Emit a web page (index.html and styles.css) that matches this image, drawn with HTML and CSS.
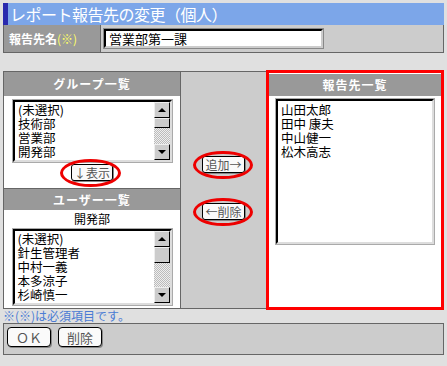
FILE: index.html
```html
<!DOCTYPE html>
<html lang="ja">
<head>
    <meta charset="UTF-8">
    <title>レポート報告先の変更</title>
    <link rel="stylesheet" href="styles.css">
</head>
<body>
    <div class="title">レポート報告先の変更（個人）</div>

    <div class="name-row">
        <div class="name-label">報告先名<span class="req">(※)</span></div>
        <div class="name-field"><div class="text-input">営業部第一課</div></div>
    </div>

    <div class="main">
        <div class="col-left">
            <div class="col-head">グループ一覧</div>
            <div class="pane">
                <div class="listbox list-group">
                    <div class="items">
                        <div>(未選択)</div>
                        <div>技術部</div>
                        <div>営業部</div>
                        <div>開発部</div>
                    </div>
                    <div class="scrollbar">
                        <div class="sb-btn"><span class="arrow-up"></span></div>
                        <div class="sb-thumb"></div>
                        <div class="sb-track"></div>
                        <div class="sb-btn"><span class="arrow-down"></span></div>
                    </div>
                </div>
                <span class="mark mark-show"><button class="btn">↓表示</button></span>
            </div>
            <div class="col-head head-user">ユーザー一覧</div>
            <div class="pane pane-user">
                <div class="group-name">開発部</div>
                <div class="listbox list-user">
                    <div class="items">
                        <div>(未選択)</div>
                        <div>針生管理者</div>
                        <div>中村一義</div>
                        <div>本多涼子</div>
                        <div>杉崎慎一</div>
                    </div>
                    <div class="scrollbar">
                        <div class="sb-btn"><span class="arrow-up"></span></div>
                        <div class="sb-thumb"></div>
                        <div class="sb-track"></div>
                        <div class="sb-btn"><span class="arrow-down"></span></div>
                    </div>
                </div>
            </div>
        </div>

        <div class="col-mid">
            <span class="mark mark-add"><button class="btn">追加→</button></span>
            <span class="mark mark-del"><button class="btn">←削除</button></span>
        </div>

        <div class="col-right">
            <div class="col-head">報告先一覧</div>
            <div class="listbox list-report">
                <div class="items">
                    <div>山田太郎</div>
                    <div>田中 康夫</div>
                    <div>中山健一</div>
                    <div>松木高志</div>
                </div>
            </div>
        </div>
    </div>

    <p class="note">※(※)は必須項目です。</p>

    <div class="actions">
        <button class="btn btn-big">ＯＫ</button>
        <button class="btn btn-big">削除</button>
    </div>
</body>
</html>
```

FILE: styles.css
```css
body {
    margin: 0;
    padding: 3px;
    background: #e0e0e0;
    font-family: "Noto Sans CJK JP", "DejaVu Sans", sans-serif;
    font-size: 12px;
    color: #000;
}
.title {
    width: 434px;
    height: 22px;
    line-height: 22px;
    background: #7ca6e9;
    border-left: 5px solid #2a2aae;
    color: #fff;
    font-size: 16px;
    padding-left: 2px;
    letter-spacing: -0.5px;
}
.name-row {
    display: flex;
    width: 439px;
    height: 27px;
    border: 1px solid #666;
    border-top: 0;
    background: #ccc;
}
.name-label {
    width: 91px;
    padding-left: 5px;
    background: #999;
    border-right: 1px solid #666;
    color: #fff;
    font-weight: bold;
    line-height: 27px;
}
.req {
    color: #ffff66;
    font-weight: normal;
}
.name-field {
    padding: 4px 0 0 3px;
}
.text-input {
    width: 209px;
    height: 15px;
    line-height: 15px;
    padding: 0 3px;
    background: #fff;
    border: 2px solid;
    border-color: #000 #ccc #ccc #000;
    outline: 1px solid #888;
    font-size: 13px;
}
.main {
    display: flex;
    margin-top: 18px;
    height: 238px;
}
.col-left {
    width: 176px;
    border: 1px solid #666;
    border-right: 0;
    background: #fff;
}
.col-head {
    height: 24px;
    line-height: 24px;
    background: #999;
    color: #fff;
    font-weight: bold;
    text-align: center;
    letter-spacing: 1px;
}
.head-user {
    border-top: 1px solid #666;
    height: 21px;
    line-height: 21px;
}
.pane {
    display: flex;
    flex-direction: column;
    align-items: center;
    padding-top: 4px;
    height: 88px;
}
.pane-user {
    height: auto;
    padding-top: 0;
}
.group-name {
    height: 18px;
    line-height: 18px;
}
.listbox {
    display: flex;
    background: #fff;
    border: 2px solid;
    border-color: #000 #ddd #ddd #000;
    outline: 1px solid #aaa;
    font-size: 12.5px;
    line-height: 14px;
}
.items {
    flex: 1;
    padding: 1px 0 0 3px;
    overflow: hidden;
}
.list-group {
    width: 155px;
    height: 58px;
    margin-left: 1px;
}
.list-user {
    width: 155px;
    height: 72px;
    margin-top: 1px;
}
.scrollbar {
    width: 16px;
    display: flex;
    flex-direction: column;
    border-left: 1px solid #fff;
}
.sb-btn {
    height: 14px;
    background: #ccc;
    border: 1px solid;
    border-color: #eee #000 #000 #eee;
    display: flex;
    align-items: center;
    justify-content: center;
}
.sb-thumb {
    height: 8px;
    background: #ccc;
    border: 1px solid;
    border-color: #eee #000 #000 #eee;
}
.list-user .sb-thumb {
    height: 14px;
}
.sb-track {
    flex: 1;
    background-color: #ddd;
    background-image: repeating-conic-gradient(#bbb 0 25%, #eee 0 50%);
    background-size: 2px 2px;
}
.arrow-up,
.arrow-down {
    width: 0;
    height: 0;
    border-left: 4px solid transparent;
    border-right: 4px solid transparent;
}
.arrow-up {
    border-bottom: 4px solid #000;
}
.arrow-down {
    border-top: 4px solid #000;
}
.col-mid {
    width: 85px;
    background: #ccc;
    border: 1px solid #666;
    border-right: 0;
    display: flex;
    flex-direction: column;
    align-items: center;
    padding-top: 84px;
    gap: 30px;
}
.col-right {
    width: 172px;
    margin-top: -1px;
    height: 234px;
    border: 3px solid #f00;
    background: #fff;
    display: flex;
    flex-direction: column;
    align-items: center;
}
.col-right .col-head {
    align-self: stretch;
    height: 22px;
    line-height: 22px;
    margin-top: 1px;
}
.list-report {
    width: 154px;
    height: 141px;
    margin-top: 3px;
}
.list-report .items {
    padding-top: 2px;
}
.btn {
    font-family: inherit;
    font-size: 12px;
    color: #555;
    background: #fafafa;
    border: 1px solid #000;
    border-radius: 3px;
    box-shadow: 1px 1px 0 #888;
    padding: 0 2px;
    height: 17px;
    line-height: 15px;
}
.mark {
    position: relative;
    display: inline-block;
}
.mark::after {
    content: "";
    position: absolute;
    left: -9px;
    right: -8px;
    top: -5px;
    bottom: -6px;
    border: 3px solid #e00;
    border-radius: 50%;
}
.mark-show {
    margin-top: 2px;
}
.mark-show::after {
    left: -11px;
}
.note {
    margin: 1px 0 0;
    color: #4a7bd4;
    line-height: 12px;
    height: 12px;
}
.actions {
    margin-top: 1px;
    width: 433px;
    height: 27px;
    border: 1px solid #666;
    background: #ccc;
    padding: 3px 3px 0;
    display: flex;
    gap: 7px;
    align-items: flex-start;
}
.btn-big {
    height: 20px;
    padding: 0 8px;
    font-size: 13px;
    border-radius: 4px;
}
```
